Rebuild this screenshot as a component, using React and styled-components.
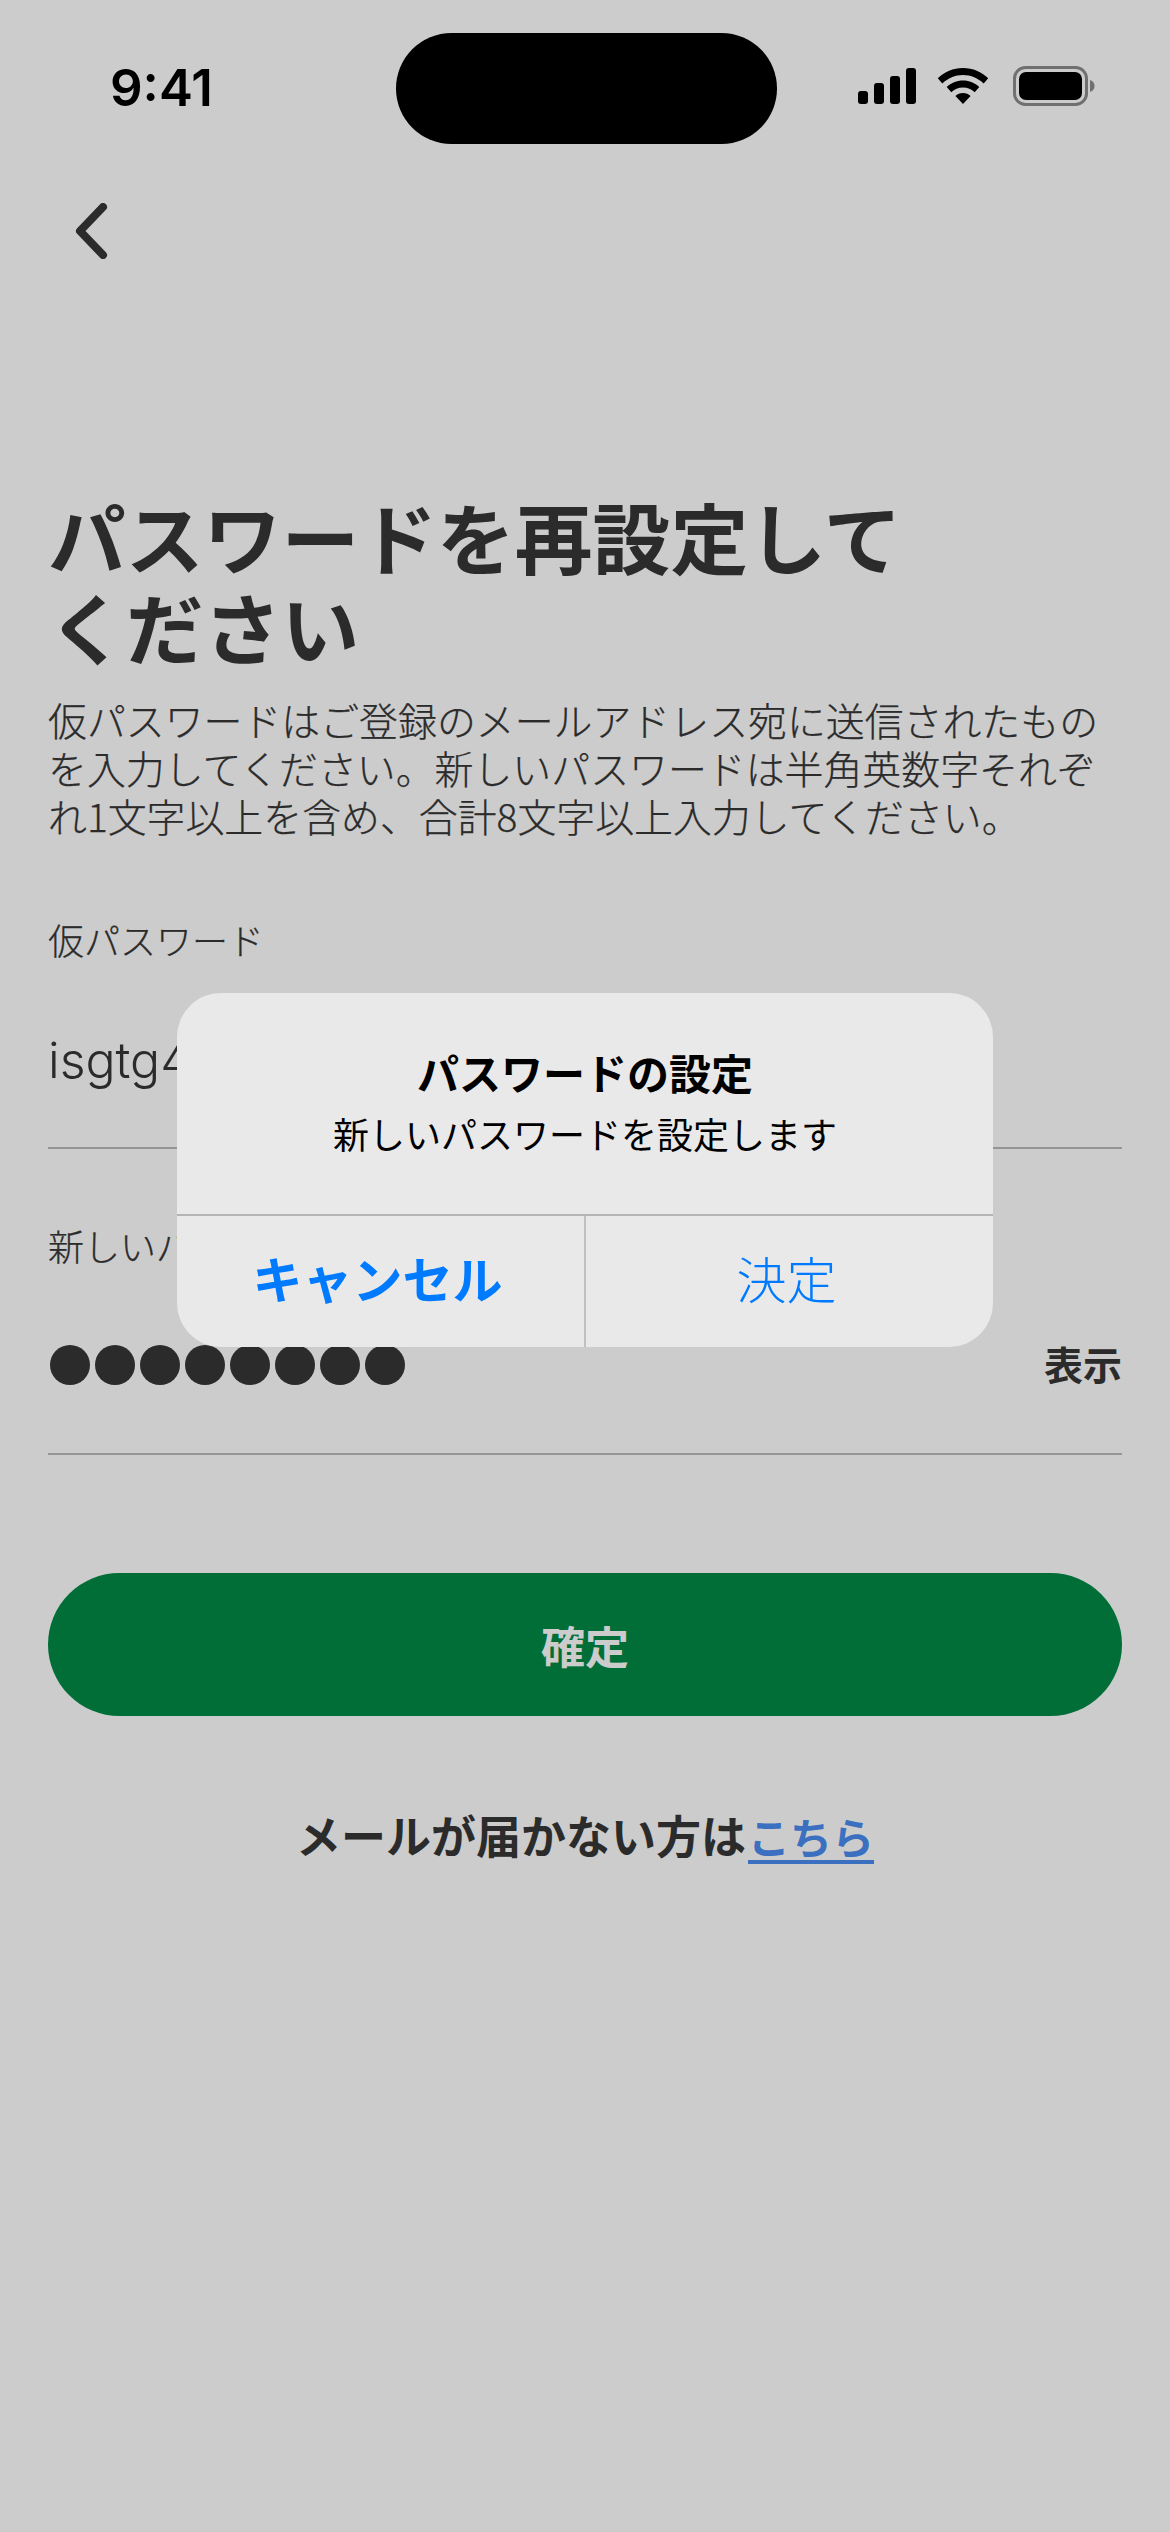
import React from "react";
import styled, { createGlobalStyle } from "styled-components";

const Global = createGlobalStyle`
  html, body { margin: 0; padding: 0; background: #fff; }
  * { box-sizing: border-box; }
`;
const JP = `"Noto Sans CJK JP", "Noto Sans", sans-serif`;

const Page = styled.div`
  position: relative;
  width: 1170px;
  height: 2532px;
  overflow: hidden;
  background: #fff;
  color: #363636;
  font-family: ${JP};
`;
const StatusBar = styled.div`
  display: grid;
  grid-template-columns: 396px 381px 1fr;
  padding-top: 33px;
  height: 144px;
`;
const Time = styled.div`
  padding-left: 110px;
  font: 600 51px/111px Inter, "Liberation Sans", sans-serif;
  color: #000;
  margin-top: -1px;
`;
const Island = styled.div`
  height: 111px;
  border-radius: 56px;
  background: #000;
`;
const StatusIcons = styled.div`
  display: flex;
  align-items: center;
  gap: 21px;
  padding-left: 81px;
  height: 105px;
`;
const BackRow = styled.div`
  padding: 59px 0 0 74px;
  height: 346px;
  svg { display: block; }
`;
const Content = styled.main`
  padding: 0 48px;
`;
const Title = styled.h1`
  margin: 0;
  font-size: 77.8px;
  line-height: 90px;
  font-weight: 700;
  color: #363636;
`;
const Lead = styled.p`
  margin: 25px 0 0;
  font-size: 38.9px;
  line-height: 48px;
  font-weight: 300;
  -webkit-text-stroke: 0.25px #363636;
  color: #363636;
`;
const Field = styled.section`
  margin-top: ${p => p.$top}px;
`;
const Label = styled.div`
  font-size: 36px;
  line-height: 50px;
  font-weight: 300;
  -webkit-text-stroke: 0.25px #363636;
  color: #363636;
`;
const InputRow = styled.div`
  display: flex;
  align-items: center;
  justify-content: space-between;
  margin-top: 50px;
  height: 135px;
  padding-bottom: ${p => p.$pad}px;
  border-bottom: 2px solid #bcbcbc;
`;
const Value = styled.span`
  font-family: Inter, "Liberation Sans", sans-serif;
  font-size: 50px;
  font-weight: 300;
  color: #363636;
`;
const Dots = styled.div`
  display: flex;
  gap: 5px;
  padding-left: 2px;
`;
const Dot = styled.i`
  display: block;
  width: 40px;
  height: 40px;
  border-radius: 50%;
  background: #363636;
`;
const Toggle = styled.span`
  font-size: 39px;
  font-weight: 700;
  color: #363636;
  margin-top: -5px;
`;
const Primary = styled.button`
  display: block;
  width: 100%;
  height: 143px;
  margin-top: 118px;
  border: 0;
  border-radius: 72px;
  background: #008a44;
  color: #fff;
  font-family: ${JP};
  font-size: 44px;
  font-weight: 700;
`;
const Foot = styled.p`
  margin: 89px 0 0;
  text-align: center;
  font-size: 45px;
  line-height: 60px;
  font-weight: 700;
  color: #363636;
`;
const Link = styled.a`
  margin-left: 2px;
  font-size: 42px;
  color: #4a8bf0;
  text-decoration: underline;
  text-underline-offset: 6px;
`;
const Scrim = styled.div`
  position: absolute;
  inset: 0;
  background: rgba(0, 0, 0, 0.2);
`;
const Dialog = styled.div`
  position: absolute;
  left: 177px;
  top: 993px;
  width: 816px;
  height: 354px;
  border-radius: 44px;
  background: #e9e9e9;
  display: flex;
  flex-direction: column;
  overflow: hidden;
`;
const DialogBody = styled.div`
  height: 223px;
  flex: none;
  padding-top: 49px;
  text-align: center;
  color: #000;
  border-bottom: 2px solid #b4b4b4;
`;
const DialogTitle = styled.div`
  font-size: 42px;
  line-height: 60px;
  font-weight: 700;
`;
const DialogText = styled.div`
  font-size: 36px;
  line-height: 50px;
  font-weight: 400;
  margin-top: 6px;
`;
const DialogActions = styled.div`
  flex: 1;
  display: grid;
  grid-template-columns: 407px 1fr;
`;
const Action = styled.button`
  border: 0;
  background: none;
  padding: 0 6px 10px 0;
  font-family: ${JP};
  font-size: 50px;
  color: #007aff;
  font-weight: ${p => (p.$bold ? 700 : 300)};
  & + & { border-left: 2px solid #c0c0c0; }
`;

export default function App() {
  return (
    <Page>
      <Global />
      <StatusBar>
        <Time>9:41</Time>
        <Island />
        <StatusIcons>
          <svg width="58" height="36" viewBox="0 0 58 36">
            <rect x="0" y="23" width="10" height="13" rx="3" />
            <rect x="16" y="15" width="10" height="21" rx="3" />
            <rect x="32" y="8" width="10" height="28" rx="3" />
            <rect x="48" y="0" width="10" height="36" rx="3" />
          </svg>
          <svg width="52" height="36" viewBox="0 0 52 36">
            <path d="M26 0C16 0 7.500 3.800 0.800 10.200L5.300 15.500C11 10.100 18 7 26 7s15 3.100 20.700 8.500l4.500-5.300C44.500 3.800 36 0 26 0Z" />
            <path d="M26 12.500c-6.300 0-12 2.400-16.300 6.500l4.600 5.200C17.400 21.300 21.400 19.600 26 19.600s8.600 1.700 11.700 4.600l4.600-5.200C38 14.900 32.300 12.500 26 12.500Z" />
            <path d="M26 25c-3 0-5.600 1.100-7.600 3L26 36l7.600-8c-2-1.900-4.600-3-7.600-3Z" />
          </svg>
          <svg width="85" height="40" viewBox="-3 0 85 40">
            <rect x="1.500" y="1.500" width="72" height="37" rx="11" fill="none" stroke="#8c8c8c" strokeWidth="3" />
            <rect x="6" y="6" width="63" height="28" rx="7" />
            <path d="M77 14c3 1 4.500 3 4.500 6s-1.500 5-4.500 6Z" fill="#8c8c8c" />
          </svg>
        </StatusIcons>
      </StatusBar>
      <BackRow>
        <svg width="34" height="56" viewBox="0 0 34 56" fill="none" stroke="#363636" strokeWidth="8" strokeLinecap="round" strokeLinejoin="round">
          <path d="M29 4 6 28l23 24" />
        </svg>
      </BackRow>
      <Content>
        <Title>パスワードを再設定して<br />ください</Title>
        <Lead>仮パスワードはご登録のメールアドレス宛に送信されたものを入力してください。新しいパスワードは半角英数字それぞれ1文字以上を含め、合計8文字以上入力してください。</Lead>
        <Field $top={75}>
          <Label>仮パスワード</Label>
          <InputRow $pad={41}><Value>isgtg4k2</Value></InputRow>
        </Field>
        <Field $top={71}>
          <Label>新しいパスワード</Label>
          <InputRow $pad={43}>
            <Dots>{Array.from({ length: 8 }, (_, i) => <Dot key={i} />)}</Dots>
            <Toggle>表示</Toggle>
          </InputRow>
        </Field>
        <Primary>確定</Primary>
        <Foot>メールが届かない方は<Link>こちら</Link></Foot>
      </Content>
      <Scrim />
      <Dialog>
        <DialogBody>
          <DialogTitle>パスワードの設定</DialogTitle>
          <DialogText>新しいパスワードを設定します</DialogText>
        </DialogBody>
        <DialogActions>
          <Action $bold>キャンセル</Action>
          <Action>決定</Action>
        </DialogActions>
      </Dialog>
    </Page>
  );
}
